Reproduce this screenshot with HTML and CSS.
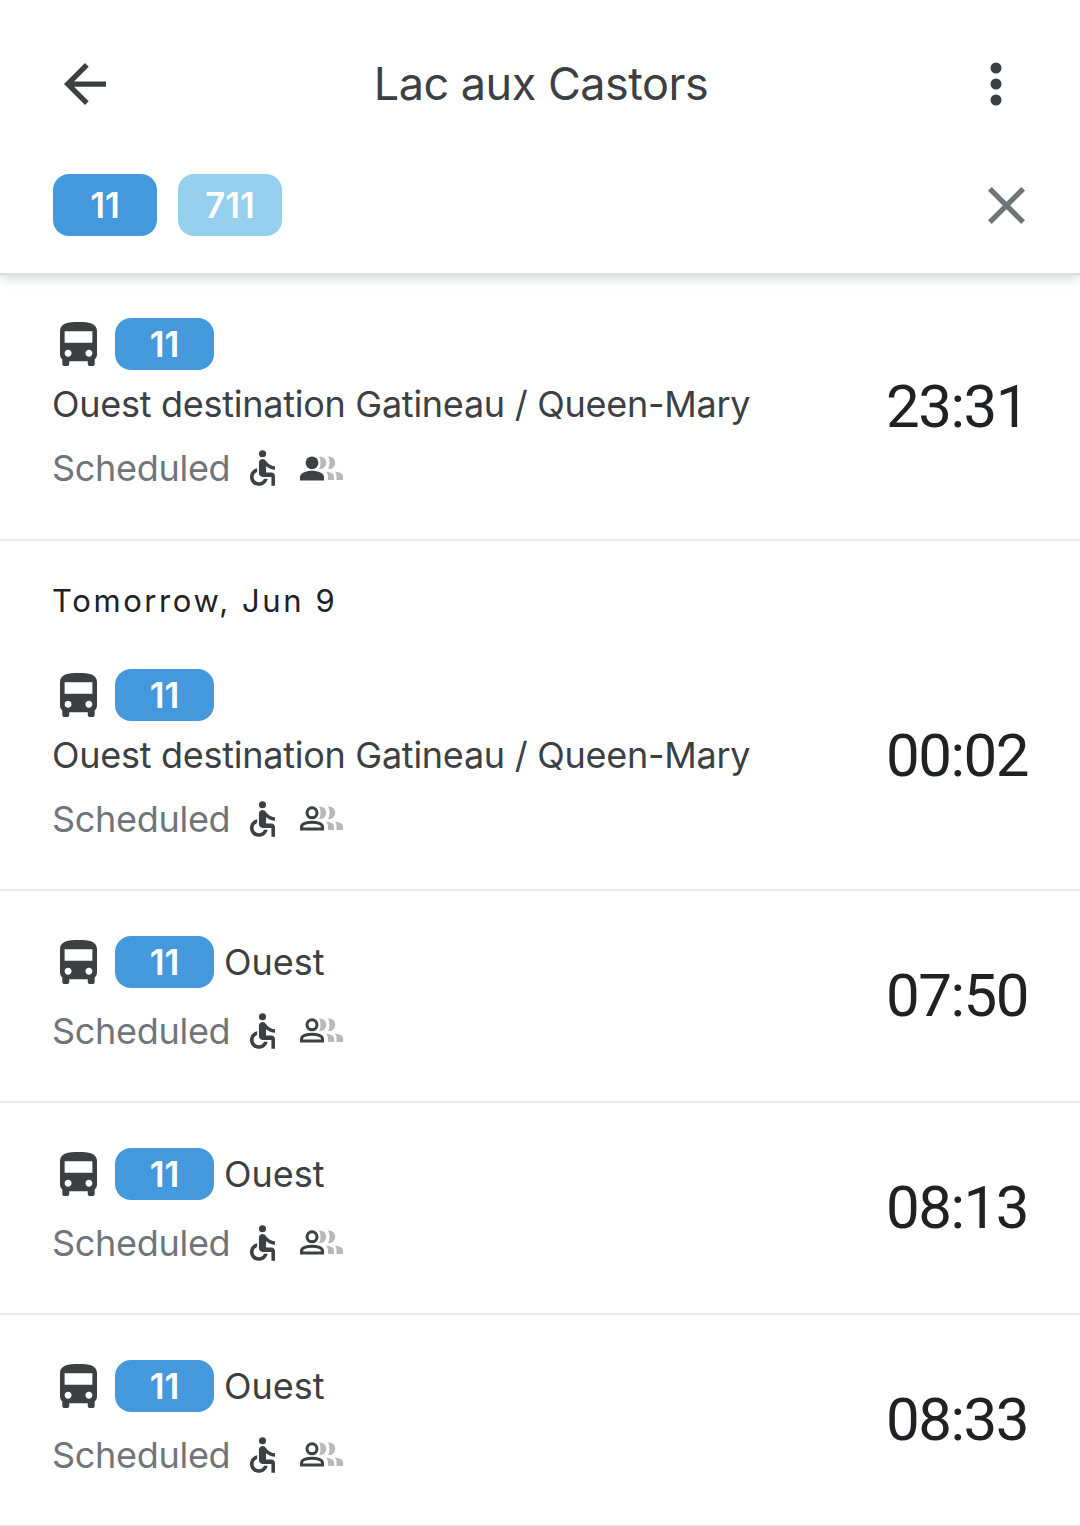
FILE: index.html
```html
<!DOCTYPE html>
<html>
<head>
<meta charset="utf-8">
<title>Lac aux Castors</title>
<link rel="stylesheet" href="styles.css">
</head>
<body>

<svg class="defs" width="0" height="0">
  <symbol id="bus" viewBox="4 2 16 19"><path d="M4 16c0 .88.39 1.67 1 2.22V20c0 .55.45 1 1 1h1c.55 0 1-.45 1-1v-1h8v1c0 .55.45 1 1 1h1c.55 0 1-.45 1-1v-1.78c.61-.55 1-1.34 1-2.22V6c0-3.5-3.58-4-8-4s-8 .5-8 4v10zm3.5 1c-.83 0-1.5-.67-1.5-1.5S6.67 14 7.5 14s1.5.67 1.5 1.5S8.33 17 7.5 17zm9 0c-.83 0-1.5-.67-1.5-1.5s.67-1.5 1.5-1.5 1.5.67 1.5 1.5-.67 1.5-1.5 1.5zm1.5-6H6V6h12v5z"/></symbol>
  <symbol id="wheelchair" viewBox="5 2 14 20"><circle cx="12" cy="4" r="2"/><path d="M19 13v-2c-1.54.02-3.09-.75-4.07-1.83l-1.29-1.43c-.17-.19-.38-.34-.61-.45-.01 0-.01-.01-.02-.01H13c-.35-.2-.75-.3-1.19-.26C10.76 7.11 10 8.04 10 9.09V15c0 1.1.9 2 2 2h5v5h2v-5.5c0-1.1-.9-2-2-2h-3v-3.45c1.29 1.07 3.25 1.94 5 1.95zm-6.17 5c-.41 1.16-1.52 2-2.83 2-1.66 0-3-1.34-3-3 0-1.31.84-2.41 2-2.83V12.1c-2.28.46-4 2.48-4 4.9 0 2.76 2.24 5 5 5 2.42 0 4.44-1.72 4.9-4h-2.07z"/></symbol>
  <symbol id="crowd-back" viewBox="0 0 43 25">
    <path class="crowd-fill" d="M19 .5h1a6.300 6.300 0 0 1 0 12.600h-1c2-3 2-9.600 0-12.600zM28 .5h1a6.300 6.300 0 0 1 0 12.600h-1c2-3 2-9.600 0-12.600z"/>
    <path class="crowd-fill" d="M26 15.500c3.500.5 8 1.500 8 5v3.500h-6v-3.500c0-2-.8-3.500-2-5zM35 15.500c3.500.5 8 1.500 8 5v3.500h-6.500v-3.500c0-2-.4-3.500-1.500-5z"/>
  </symbol>
  <symbol id="person-full" viewBox="0 0 43 25">
    <circle cx="12" cy="6.800" r="6.400"/>
    <path d="M0 24.500v-3.500c0-4 6-6.300 12-6.300s12 2.300 12 6.300v3.500z"/>
  </symbol>
  <symbol id="person-line" viewBox="0 0 43 25">
    <circle class="person-stroke" cx="12" cy="6.800" r="5"/>
    <path class="person-stroke" d="M1.500 23v-2c0-3 5-4.800 10.500-4.800s10.500 1.800 10.500 4.800v2z"/>
  </symbol>
</svg>

<div class="header">
  <div class="topbar">
    <svg class="back" viewBox="4 4 16 16"><path d="M20 11H7.830l5.590-5.590L12 4l-8 8 8 8 1.410-1.410L7.830 13H20v-2z"/></svg>
    <div class="title">Lac aux Castors</div>
    <svg class="more" viewBox="0 0 12 44"><circle cx="6" cy="6" r="5.500"/><circle cx="6" cy="22" r="5.500"/><circle cx="6" cy="38" r="5.500"/></svg>
  </div>
  <div class="filters">
    <span class="chip">11</span>
    <span class="chip light">711</span>
    <svg class="close" viewBox="5 5 14 14"><path d="M19 6.410 17.590 5 12 10.590 6.410 5 5 6.410 10.590 12 5 17.590 6.410 19 12 13.410 17.590 19 19 17.590 13.410 12z"/></svg>
  </div>
</div>

<div class="row first">
  <div class="main">
    <div class="line">
      <svg class="bus"><use href="#bus"/></svg>
      <span class="badge">11</span>
    </div>
    <div class="dest">Ouest destination Gatineau / Queen-Mary</div>
    <div class="status">
      <span>Scheduled</span>
      <svg class="chair"><use href="#wheelchair"/></svg>
      <svg class="crowd"><use href="#person-full"/><use href="#crowd-back"/></svg>
    </div>
  </div>
  <div class="time">23:31</div>
</div>

<div class="date">Tomorrow, Jun 9</div>
<div class="row dated">
  <div class="main">
    <div class="line">
      <svg class="bus"><use href="#bus"/></svg>
      <span class="badge">11</span>
    </div>
    <div class="dest">Ouest destination Gatineau / Queen-Mary</div>
    <div class="status">
      <span>Scheduled</span>
      <svg class="chair"><use href="#wheelchair"/></svg>
      <svg class="crowd"><use href="#person-line"/><use href="#crowd-back"/></svg>
    </div>
  </div>
  <div class="time">00:02</div>
</div>

<div class="row short">
  <div class="main">
    <div class="line">
      <svg class="bus"><use href="#bus"/></svg>
      <span class="badge">11</span>
      <span class="dir">Ouest</span>
    </div>
    <div class="status">
      <span>Scheduled</span>
      <svg class="chair"><use href="#wheelchair"/></svg>
      <svg class="crowd"><use href="#person-line"/><use href="#crowd-back"/></svg>
    </div>
  </div>
  <div class="time">07:50</div>
</div>

<div class="row short">
  <div class="main">
    <div class="line">
      <svg class="bus"><use href="#bus"/></svg>
      <span class="badge">11</span>
      <span class="dir">Ouest</span>
    </div>
    <div class="status">
      <span>Scheduled</span>
      <svg class="chair"><use href="#wheelchair"/></svg>
      <svg class="crowd"><use href="#person-line"/><use href="#crowd-back"/></svg>
    </div>
  </div>
  <div class="time">08:13</div>
</div>

<div class="row short">
  <div class="main">
    <div class="line">
      <svg class="bus"><use href="#bus"/></svg>
      <span class="badge">11</span>
      <span class="dir">Ouest</span>
    </div>
    <div class="status">
      <span>Scheduled</span>
      <svg class="chair"><use href="#wheelchair"/></svg>
      <svg class="crowd"><use href="#person-line"/><use href="#crowd-back"/></svg>
    </div>
  </div>
  <div class="time">08:33</div>
</div>

</body>
</html>
```

FILE: styles.css
```css
html, body {
  margin: 0;
  height: 1526px;
  overflow: hidden;
  background: #fff;
  font-family: Inter, Roboto, sans-serif;
  color: #3c4043;
}

.defs {
  display: block;
  height: 0;
}

/* Header */
.header {
  position: relative;
  z-index: 1;
  height: 273px;
  border-bottom: 2px solid #dadce0;
  box-shadow: 0 3px 12px rgba(60, 64, 67, 0.22);
  background: #fff;
}

.topbar {
  height: 168px;
  display: flex;
  align-items: center;
  padding: 0 78px 0 64px;
}

.back {
  width: 42px;
  height: 42px;
  fill: #3c4043;
}

.title {
  flex: 1;
  padding-right: 14px;
  margin-bottom: 2px;
  text-align: center;
  font-size: 45px;
  letter-spacing: -0.5px;
  color: #3c4043;
}

.more {
  width: 12px;
  height: 44px;
  fill: #3c4043;
}

.filters {
  display: flex;
  align-items: center;
  gap: 21px;
  padding: 6px 55px 0 53px;
}

.chip {
  width: 104px;
  height: 62px;
  border-radius: 16px;
  background: #4499dc;
  color: #fff;
  font-size: 35px;
  font-weight: 600;
  display: flex;
  align-items: center;
  justify-content: center;
}

.chip.light {
  background: #96cfee;
}

.close {
  width: 37px;
  height: 37px;
  margin-left: auto;
  fill: #70757a;
}

/* Departure rows */
.row {
  display: flex;
  justify-content: space-between;
  align-items: center;
  padding: 0 52px 0 53px;
  border-bottom: 2px solid #e8eaed;
  box-sizing: border-box;
}

.first {
  height: 266px;
}

.first .main {
  margin-bottom: 2px;
}

.dated {
  height: 267px;
}

.short {
  height: 212px;
}

.date {
  padding-top: 39px;
  padding-left: 52px;
  height: 44px;
  line-height: 42px;
  font-size: 31px;
  letter-spacing: 2.6px;
  color: #202124;
}

.line {
  display: flex;
  align-items: center;
  height: 52px;
}

.bus {
  width: 37px;
  height: 44px;
  margin: 0 18px 0 7px;
  fill: #3c4043;
}

.badge {
  width: 99px;
  height: 52px;
  border-radius: 16px;
  background: #4499dc;
  color: #fff;
  font-size: 35px;
  font-weight: 600;
  display: flex;
  align-items: center;
  justify-content: center;
}

.dir {
  margin-left: 10px;
  font-size: 36px;
  color: #3c4043;
}

.dest {
  margin-top: 8px;
  margin-left: -1px;
  font-size: 36px;
  letter-spacing: -0.27px;
  line-height: 52px;
  color: #3c4043;
  white-space: nowrap;
}

.status {
  display: flex;
  align-items: center;
  margin-top: 12px;
  margin-left: -1px;
  height: 52px;
  font-size: 36px;
  letter-spacing: -0.3px;
  color: #70757a;
}

.short .status {
  margin-top: 17px;
}

.chair {
  width: 25px;
  height: 36px;
  margin-left: 20px;
  fill: #3c4043;
}

.crowd {
  width: 43px;
  height: 25px;
  margin-left: 25px;
  fill: #3c4043;
}

.crowd-fill {
  fill: #b8b8b8;
}

.person-stroke {
  fill: none;
  stroke: #3c4043;
  stroke-width: 3;
}

.time {
  margin-bottom: 2px;
  font-family: Roboto, sans-serif;
  font-size: 60px;
  letter-spacing: -1.5px;
  color: #202124;
  white-space: nowrap;
}
```
